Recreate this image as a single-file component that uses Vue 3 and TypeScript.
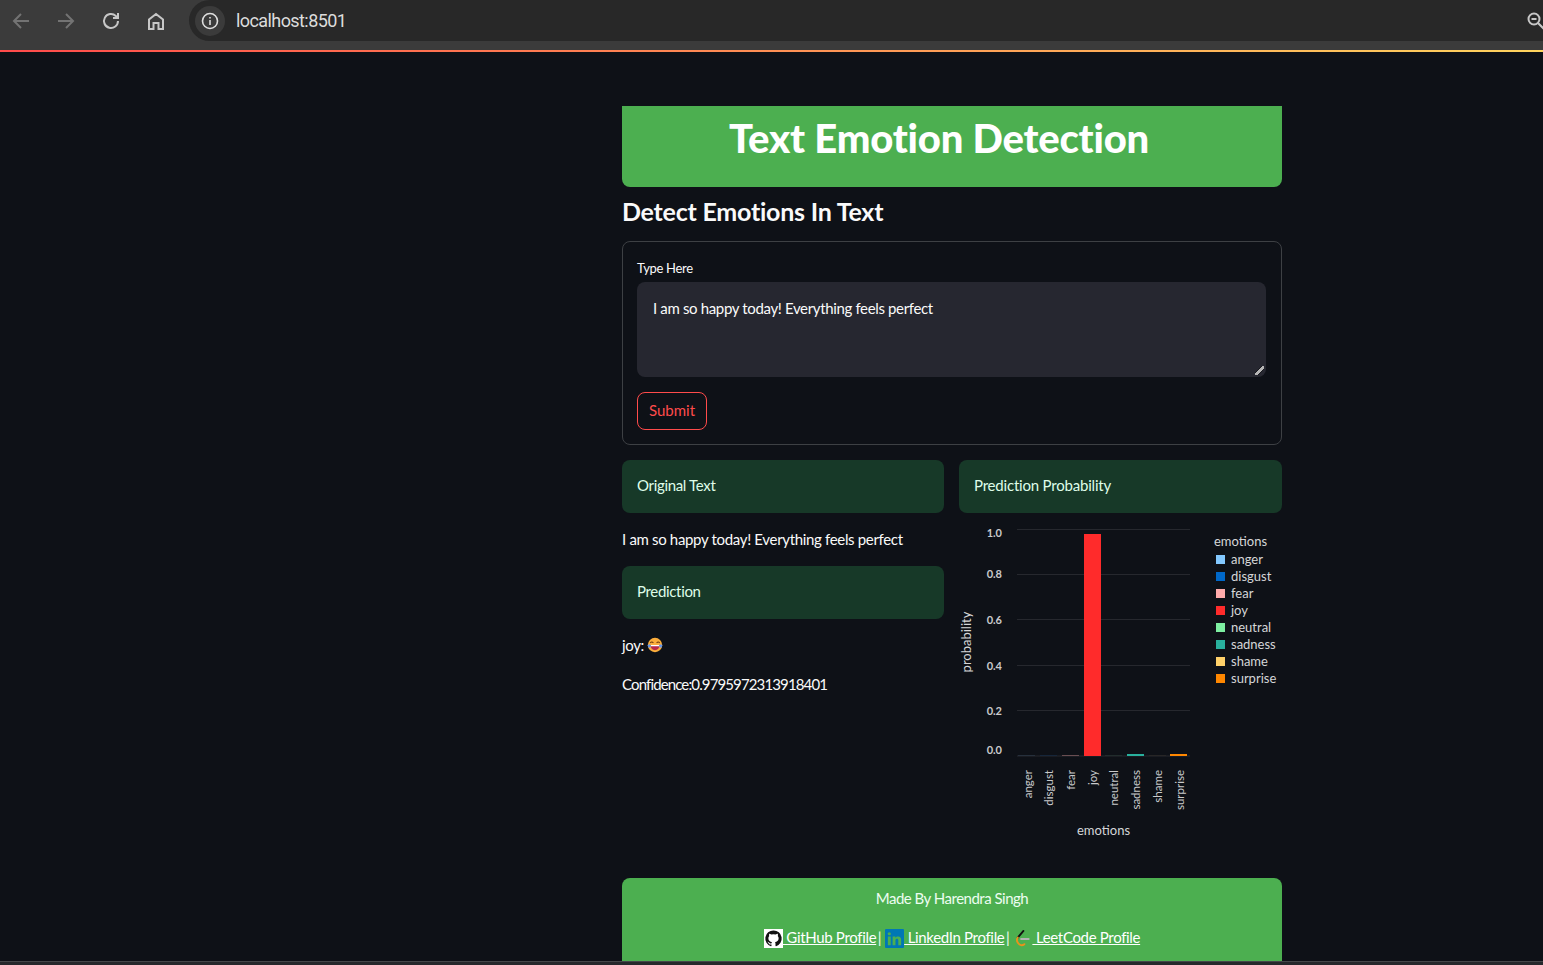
<script setup lang="ts">
const gridLines = [529.5, 574.5, 619.5, 665.5, 710.5]

const yTicks = [
  { label: '1.0', y: 537 },
  { label: '0.8', y: 578 },
  { label: '0.6', y: 624 },
  { label: '0.4', y: 670 },
  { label: '0.2', y: 715 },
  { label: '0.0', y: 754 },
]

// x is the bar's left edge, h its height above the baseline, a its opacity
const emotions = [
  { name: 'anger', color: '#83c9ff', x: 1018, h: 1, a: 0.12, labelX: 1032, legendY: 555 },
  { name: 'disgust', color: '#0068c9', x: 1040, h: 1, a: 0.15, labelX: 1053, legendY: 572 },
  { name: 'fear', color: '#ffabab', x: 1062, h: 1, a: 0.35, labelX: 1075, legendY: 589 },
  { name: 'joy', color: '#ff2b2b', x: 1084, h: 222, a: 1, labelX: 1097, legendY: 606 },
  { name: 'neutral', color: '#7defa1', x: 1105, h: 1, a: 0.08, labelX: 1118, legendY: 623 },
  { name: 'sadness', color: '#29b09d', x: 1127, h: 2, a: 1, labelX: 1140, legendY: 640 },
  { name: 'shame', color: '#ffd16a', x: 1149, h: 1, a: 0.06, labelX: 1162, legendY: 657 },
  { name: 'surprise', color: '#ff8700', x: 1170, h: 2, a: 1, labelX: 1184, legendY: 674 },
]
</script>

<template>
  <div class="screen">
    <header class="browser">
      <div class="toolbar">
        <div class="nav">
          <svg class="nav-icon dim" viewBox="0 0 24 24"><path d="M20 12H5M12 5l-7 7 7 7" /></svg>
          <svg class="nav-icon dim" viewBox="0 0 24 24"><path d="M4 12h15M12 5l7 7-7 7" /></svg>
          <svg class="nav-icon" viewBox="0 0 24 24"><path d="M19 12a7 7 0 1 1-2.200-5.100L19 9M19 4v5h-5" /></svg>
          <svg class="nav-icon" viewBox="0 0 24 24"><path d="M5 20v-9.500L12 5l7 5.500V20h-4.500v-6h-5v6z" /></svg>
        </div>
        <div class="address">
          <span class="site-chip">
            <svg class="info" viewBox="0 0 20 20">
              <circle cx="10" cy="10" r="7.500" />
              <path d="M10 9v5M10 6v1.500" />
            </svg>
          </span>
          <span class="url">localhost:8501</span>
          <svg class="zoom-icon" viewBox="0 0 20 20">
            <circle cx="8" cy="8" r="5.500" />
            <path d="M5.500 8h5M12 12l6 6" />
          </svg>
        </div>
      </div>
      <div class="decoration"></div>
    </header>

    <main class="page">
      <div class="banner">
        <h1>Text Emotion Detection</h1>
      </div>
      <h2>Detect Emotions In Text</h2>

      <form class="form" @submit.prevent>
        <label class="field-label" for="input-text">Type Here</label>
        <textarea id="input-text" class="input" spellcheck="false">I am so happy today! Everything feels perfect</textarea>
        <button class="submit" type="submit">Submit</button>
      </form>

      <div class="columns">
        <section class="col">
          <div class="alert">Original Text</div>
          <p class="original">I am so happy today! Everything feels perfect</p>
          <div class="alert">Prediction</div>
          <p class="joy">
            joy:
            <svg class="emoji" viewBox="0 0 20 20">
              <circle cx="10" cy="10" r="9" fill="#fbae3c" />
              <path d="M4.500 10h11c0 4-2 6.500-5.500 6.500S4.500 14 4.500 10z" fill="#b82a4a" />
              <path d="M4.800 10h10.400l-.3 1.500H5.100z" fill="#fff" />
              <path d="M4 7.500q2-2.500 4 0M12 7.500q2-2.500 4 0" fill="none" stroke="#6b3a12" stroke-width="1.300" />
              <path d="M.5 10l3.500-1 1 3.500-3 1zM19.500 10l-3.500-1-1 3.500 3 1z" fill="#5f95ee" />
            </svg>
          </p>
          <p class="confidence">Confidence:0.9795972313918401</p>
        </section>

        <section class="col">
          <div class="alert alert-wide">Prediction Probability</div>
          <svg class="chart" viewBox="959 520 323 330">
            <line v-for="y in gridLines" :key="y" class="grid" x1="1017" x2="1190" :y1="y" :y2="y" />
            <line class="grid" x1="1017" x2="1190" y1="756" y2="756" />
            <text v-for="t in yTicks" :key="t.label" class="tick" x="1002" :y="t.y" text-anchor="end">{{ t.label }}</text>
            <rect
              v-for="e in emotions"
              :key="e.name"
              :x="e.x"
              :y="756 - e.h"
              width="17"
              :height="e.h"
              :fill="e.color"
              :opacity="e.a"
            />
            <text
              v-for="e in emotions"
              :key="e.name + '-label'"
              class="axis-label"
              text-anchor="end"
              :transform="`translate(${e.labelX} 770) rotate(-90)`"
            >{{ e.name }}</text>
            <text class="axis-title" x="1103.500" y="835" text-anchor="middle">emotions</text>
            <text class="axis-title" text-anchor="middle" transform="translate(971 642) rotate(-90)">probability</text>
            <text class="axis-title" x="1214" y="546">emotions</text>
            <g v-for="e in emotions" :key="e.name + '-legend'">
              <rect x="1216" :y="e.legendY" width="9" height="9" :fill="e.color" />
              <text class="legend-label" x="1231" :y="e.legendY + 9">{{ e.name }}</text>
            </g>
          </svg>
        </section>
      </div>

      <footer class="credits">
        <p class="made-by">Made By Harendra Singh</p>
        <p class="links">
          <a href="#" class="link">
            <svg class="brand github" viewBox="0 0 20 20">
              <path d="M10 1.500a8.500 8.500 0 0 0-2.700 16.600c.4.100.6-.2.600-.4v-1.500c-2.400.5-2.900-1-2.900-1-.4-1-1-1.300-1-1.300-.8-.5.100-.5.100-.5.900.100 1.300.9 1.300.9.800 1.300 2 1 2.500.7.100-.6.300-1 .6-1.200-1.900-.2-3.900-.9-3.900-4.200 0-.9.300-1.700.9-2.300-.1-.2-.4-1.100.1-2.300 0 0 .7-.2 2.300.9a8 8 0 0 1 4.200 0c1.600-1.100 2.300-.9 2.300-.9.500 1.200.2 2.100.1 2.300.5.600.9 1.400.9 2.300 0 3.300-2 4-3.900 4.200.3.300.6.800.6 1.600v2.300c0 .2.200.5.600.4A8.500 8.500 0 0 0 10 1.500z" />
            </svg> GitHub Profile</a>
          <span class="sep">|</span>
          <a href="#" class="link">
            <svg class="brand linkedin" viewBox="0 0 20 20">
              <rect width="20" height="20" rx="1" fill="#0077b5" />
              <path d="M3 8h3v9H3zM8 8h3v1.300c.6-1 1.600-1.500 2.800-1.500 2.200 0 3.200 1.400 3.200 3.800V17h-3v-4.900c0-1.200-.4-1.800-1.400-1.800s-1.600.7-1.600 1.900V17H8z" fill="#4caf50" />
              <circle cx="4.500" cy="5" r="1.700" fill="#4caf50" />
            </svg> LinkedIn Profile</a>
          <span class="sep">|</span>
          <a href="#" class="link">
            <svg class="brand leetcode" viewBox="0 0 20 20">
              <path d="M11 2L5 9" stroke="#111" />
              <path d="M5 9c-1.500 2-1 4 .5 6s4 3 6.500 1" stroke="#e8921b" />
              <path d="M8.500 10.500h8" stroke="#b3b3b3" />
            </svg> LeetCode Profile</a>
        </p>
      </footer>
    </main>

    <div class="window-edge"></div>
  </div>
</template>

<style scoped>
.screen {
  position: relative;
  height: 965px;
  overflow: hidden;
  background: #0e1117;
  color: #fafafa;
  font-family: "Lato", "Noto Sans", sans-serif;
  font-size: 15px;
  letter-spacing: -0.33px;
}

.toolbar {
  display: flex;
  height: 50px;
  background: #3b3b3b;
}
.nav {
  display: flex;
  gap: 21px;
  width: 189px;
  flex-shrink: 0;
  padding: 9px 0 0 9px;
  box-sizing: border-box;
}
.nav-icon {
  width: 24px;
  height: 24px;
  fill: none;
  stroke: #c7c7c7;
  stroke-width: 2;
}
.nav-icon.dim {
  stroke: #737373;
}
.address {
  flex: 1;
  height: 41px;
  display: flex;
  align-items: center;
  background: #282828;
  border-radius: 21px 0 0 21px;
  padding-left: 6px;
}
.site-chip {
  width: 30px;
  height: 30px;
  border-radius: 50%;
  background: #3b3b3b;
  display: flex;
  align-items: center;
  justify-content: center;
}
.info {
  width: 20px;
  height: 20px;
  fill: none;
  stroke: #dedede;
  stroke-width: 1.600;
}
.url {
  margin-left: 11px;
  color: #dcdcdc;
  font-family: "Roboto", sans-serif;
  font-size: 18px;
  letter-spacing: -0.58px;
  flex: 1;
}
.zoom-icon {
  width: 20px;
  height: 20px;
  margin-right: -2.500px;
  fill: none;
  stroke: #c7c7c7;
  stroke-width: 2;
}
.decoration {
  height: 2px;
  background: linear-gradient(90deg, #ff4b4b, #ffd45e);
}

.page {
  width: 660px;
  margin: 54px 0 0 622px;
}
.banner {
  height: 81px;
  background: #4caf50;
  border-radius: 0 0 8px 8px;
  padding-top: 7px;
  padding-right: 26px;
  box-sizing: border-box;
  text-align: center;
}
h1 {
  margin: 0;
  font-size: 40px;
  line-height: 50px;
  font-weight: 900;
  letter-spacing: -0.2px;
  color: #fff;
}
h2 {
  margin: 8px 0 14px;
  font-size: 25px;
  line-height: 32px;
  font-weight: 700;
  letter-spacing: -0.23px;
}

.form {
  height: 204px;
  box-sizing: border-box;
  border: 1px solid #3d4044;
  border-radius: 8px;
  padding: 17px 15px 0 14px;
  display: flex;
  flex-direction: column;
  align-items: flex-start;
}
.field-label {
  font-size: 13px;
  line-height: 19px;
  margin-bottom: 4px;
}
.input {
  width: 100%;
  height: 95px;
  box-sizing: border-box;
  background: #262730;
  border: none;
  border-radius: 8px;
  color: #fafafa;
  font: inherit;
  letter-spacing: -0.35px;
  line-height: 24px;
  padding: 14px 16px;
  margin: 0;
  outline: none;
}
.input::-webkit-resizer {
  background: linear-gradient(
      135deg,
      transparent 38%,
      #16171c 38%,
      #16171c 44%,
      #b5b5b5 44%,
      #b5b5b5 62%,
      #16171c 62%,
      #16171c 70%,
      transparent 70%
    )
    right 2px bottom 2px / 9px 9px no-repeat;
}
.submit {
  margin-top: 15px;
  width: 70px;
  height: 38px;
  background: transparent;
  border: 1px solid #ff4b4b;
  border-radius: 8px;
  color: #ff4b4b;
  font: inherit;
  letter-spacing: normal;
  padding: 0 0 2px;
}

.columns {
  display: grid;
  grid-template-columns: 322px 323px;
  gap: 15px;
  margin-top: 15px;
  height: 418px;
}
.col {
  min-width: 0;
}
.alert {
  height: 52.500px;
  box-sizing: border-box;
  background: #173928;
  color: #dffde9;
  border-radius: 8px;
  padding: 0 15px 2px;
  display: flex;
  align-items: center;
}
.alert-wide {
  letter-spacing: -0.2px;
}
.col p {
  margin: 0;
  line-height: 24px;
}
.original {
  padding: 14px 0 15.500px;
}
.joy {
  margin-top: 14px !important;
  display: flex;
  align-items: center;
  gap: 3px;
}
.emoji {
  width: 16px;
  height: 16px;
}
.confidence {
  margin-top: 15px !important;
  letter-spacing: -0.87px;
}
.chart {
  display: block;
  width: 323px;
  height: 330px;
  margin-top: 7.500px;
}
.grid {
  stroke: #26282e;
  stroke-width: 1;
}
.tick {
  fill: #c9cacc;
  font-size: 11px;
  font-weight: 700;
  letter-spacing: 0;
}
.axis-label {
  fill: #c9cacc;
  font-size: 11.500px;
  letter-spacing: 0;
}
.axis-title,
.legend-label {
  fill: #d5d6d8;
  font-size: 13px;
  letter-spacing: 0;
}

.credits {
  height: 83px;
  background: #4caf50;
  border-radius: 8px 8px 0 0;
  text-align: center;
  color: #ecfdf0;
  box-sizing: border-box;
  padding-top: 8px;
}
.credits p {
  margin: 0;
  line-height: 24px;
}
.made-by {
  letter-spacing: -0.5px;
}
.credits .links {
  margin-top: 15px;
}
.link {
  color: #fff;
}
.sep {
  margin: 0 4px 0 1.500px;
}
.brand {
  width: 19px;
  height: 19px;
  vertical-align: -5px;
}
.github {
  background: #fff;
  fill: #111;
}
.leetcode {
  fill: none;
  stroke-width: 2;
  stroke-linecap: round;
}

/* bottom edge of the browser window, lies over the page */
.window-edge {
  position: absolute;
  left: 0;
  right: 0;
  bottom: 0;
  height: 4px;
  box-sizing: border-box;
  background: #26282c;
  border-top: 1px solid #45474a;
}
</style>

<style>
html,
body {
  background: #0e1117;
  overflow: hidden;
}
</style>
